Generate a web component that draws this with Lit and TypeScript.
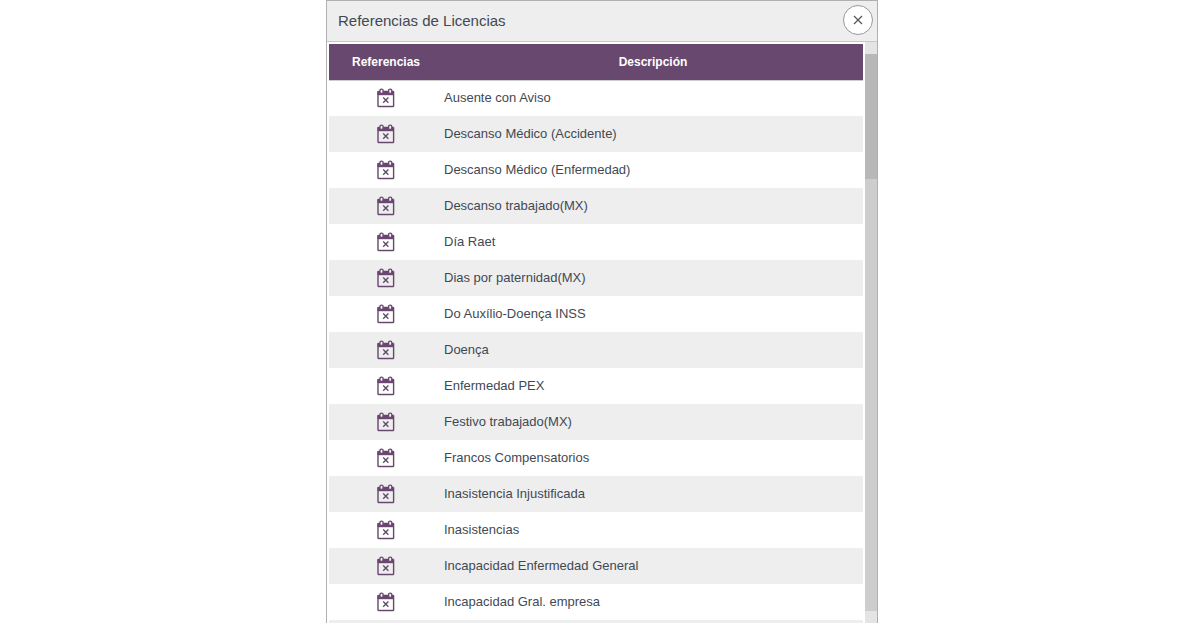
import { LitElement, html, css } from "lit";
import { customElement, property } from "lit/decorators.js";

@customElement("calendar-icon")
class CalendarIcon extends LitElement {
  static styles = css`
    :host {
      display: block;
      line-height: 0;
    }
  `;

  render() {
    return html`
      <svg width="18" height="20" viewBox="0 0 18 20" aria-hidden="true">
        <path d="M0.5 3h16.5v4.2H0.5z" fill="#69486f" />
        <rect x="1" y="3.5" width="15.6" height="15" rx="0.6" fill="none" stroke="#69486f" stroke-width="1.4" />
        <rect x="2.9" y="1.1" width="3.2" height="4.4" rx="1.5" fill="#f3eef3" stroke="#69486f" stroke-width="1.3" />
        <rect x="11.6" y="1.1" width="3.2" height="4.4" rx="1.5" fill="#f3eef3" stroke="#69486f" stroke-width="1.3" />
        <path d="M6.2 9.5l5.2 5.2M11.4 9.5l-5.2 5.2" fill="none" stroke="#5d4968" stroke-width="1.3" />
      </svg>
    `;
  }
}

@customElement("app-root")
class AppRoot extends LitElement {
  @property({ attribute: false })
  items: string[] = [
    "Ausente con Aviso",
    "Descanso Médico (Accidente)",
    "Descanso Médico (Enfermedad)",
    "Descanso trabajado(MX)",
    "Día Raet",
    "Dias por paternidad(MX)",
    "Do Auxílio-Doença INSS",
    "Doença",
    "Enfermedad PEX",
    "Festivo trabajado(MX)",
    "Francos Compensatorios",
    "Inasistencia Injustificada",
    "Inasistencias",
    "Incapacidad Enfermedad General",
    "Incapacidad Gral. empresa",
    "",
  ];

  static styles = css`
    :host {
      display: flex;
      justify-content: center;
      box-sizing: border-box;
      height: 100vh;
      padding-left: 4px;
      overflow: hidden;
      background: #fff;
      color: #3f4954;
      font-family: "Liberation Sans", Arial, sans-serif;
    }
    .dialog {
      display: flex;
      flex-direction: column;
      box-sizing: border-box;
      width: 100%;
      max-width: 552px;
      border: 1px solid #b0b0b4;
      border-bottom: 0;
      background: #fff;
    }
    .bar {
      display: flex;
      flex: none;
      align-items: center;
      justify-content: space-between;
      box-sizing: border-box;
      height: 41px;
      padding: 0 4px 2px 11px;
      border-bottom: 1px solid #c8c8c8;
      background: #eee;
    }
    h1 {
      margin: 0;
      padding-top: 2px;
      font-size: 15px;
      line-height: 20px;
      font-weight: 400;
    }
    .close {
      display: grid;
      place-items: center;
      width: 30px;
      height: 30px;
      padding: 0;
      border: 1px solid #999;
      border-radius: 50%;
      background: #fff;
    }
    .body {
      display: flex;
      flex: 1;
      min-height: 0;
      gap: 2px;
      padding-left: 2px;
    }
    .view {
      flex: 1;
      overflow: hidden;
      padding-top: 2px;
    }
    table {
      width: 100%;
      border-collapse: collapse;
      table-layout: fixed;
      font-size: 13px;
      line-height: 16px;
    }
    .col-icon {
      width: 114px;
    }
    th {
      height: 36px;
      box-sizing: border-box;
      padding: 0;
      background: #69486f;
      color: #fff;
      font-size: 12px;
    }
    td {
      box-sizing: border-box;
      height: 36px;
      padding: 0 1px;
    }
    tbody tr:nth-child(even) {
      background: #eee;
    }
    tbody tr:first-child td {
      box-shadow: inset 0 1px #ccc;
    }
    calendar-icon {
      width: 18px;
      margin: 0 auto;
    }
    .track {
      display: flex;
      flex-direction: column;
      width: 12px;
      background: #cdcdcd;
    }
    .step {
      flex: none;
      height: 12px;
      background: #e4e4e4;
    }
    .thumb {
      height: 125px;
      background: #b8b8b8;
    }
    .rest {
      flex: 1;
    }
  `;

  render() {
    return html`
      <section class="dialog" role="dialog" aria-labelledby="title">
        <header class="bar">
          <h1 id="title">Referencias de Licencias</h1>
          <button class="close" type="button" aria-label="Cerrar">
            <svg width="10" height="10" viewBox="0 0 10 10" aria-hidden="true">
              <path d="M1 1l8 8M9 1l-8 8" fill="none" stroke="#555" stroke-width="1.2" />
            </svg>
          </button>
        </header>
        <div class="body">
          <div class="view">
            <table>
              <colgroup>
                <col class="col-icon" />
                <col />
              </colgroup>
              <thead>
                <tr>
                  <th scope="col">Referencias</th>
                  <th scope="col">Descripción</th>
                </tr>
              </thead>
              <tbody>
                ${this.items.map(
                  (item) => html`
                    <tr>
                      <td><calendar-icon></calendar-icon></td>
                      <td>${item}</td>
                    </tr>
                  `,
                )}
              </tbody>
            </table>
          </div>
          <div class="track" aria-hidden="true">
            <div class="step"></div>
            <div class="thumb"></div>
            <div class="rest"></div>
            <div class="step"></div>
          </div>
        </div>
      </section>
    `;
  }
}
